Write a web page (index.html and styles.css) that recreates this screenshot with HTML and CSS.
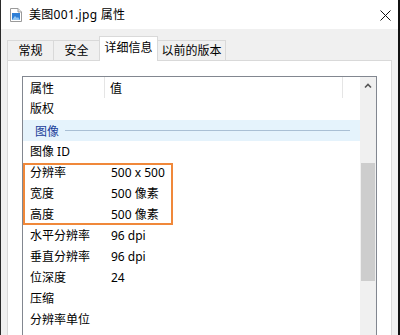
FILE: index.html
```html
<!DOCTYPE html>
<html lang="zh-CN">
<head>
  <meta charset="UTF-8">
  <title>美图001.jpg 属性</title>
  <link rel="stylesheet" href="styles.css">
</head>
<body>
  <div class="window">
    <div class="titlebar">
      <svg class="file-icon" width="12" height="14" viewBox="0 0 12 14">
        <path d="M0.5 0.5 H8 L11.5 4 V13.5 H0.5 Z" fill="#fff" stroke="#9a9a9a"/>
        <path d="M8 0.5 V4 H11.5" fill="#e8e8e8" stroke="#9a9a9a"/>
        <rect x="2" y="5" width="8" height="7" fill="#2f7fd6"/>
        <path d="M2 12 L5 8 L7 10 L8 9 L10 12 Z" fill="#8fc4f2"/>
      </svg>
      <span class="title">美图001.jpg 属性</span>
      <svg class="close" width="11" height="11" viewBox="0 0 11 11">
        <path d="M0.5 0.5 L10.5 10.5 M10.5 0.5 L0.5 10.5" stroke="#111" stroke-width="1"/>
      </svg>
    </div>

    <div class="body">
      <div class="tabs">
        <div class="tab w46">常规</div>
        <div class="tab w46">安全</div>
        <div class="tab active">详细信息</div>
        <div class="tab w68">以前的版本</div>
      </div>

      <div class="panel">
        <div class="list">
          <div class="list-main">
            <div class="header">
              <div class="hcell c1">属性</div>
              <div class="hcell c2">值</div>
            </div>
            <div class="row"><span>版权</span><span></span></div>
            <div class="group">
              <span class="group-name">图像</span>
              <span class="group-line"></span>
            </div>
            <div class="row"><span>图像 ID</span><span></span></div>
            <div class="highlight">
              <div class="row"><span>分辨率</span><span>500 x 500</span></div>
              <div class="row"><span>宽度</span><span>500 像素</span></div>
              <div class="row"><span>高度</span><span>500 像素</span></div>
            </div>
            <div class="row"><span>水平分辨率</span><span>96 dpi</span></div>
            <div class="row"><span>垂直分辨率</span><span>96 dpi</span></div>
            <div class="row"><span>位深度</span><span>24</span></div>
            <div class="row"><span>压缩</span><span></span></div>
            <div class="row"><span>分辨率单位</span><span></span></div>
          </div>
          <div class="scrollbar">
            <div class="arrow">
              <svg width="8" height="6" viewBox="0 0 8 6">
                <path d="M1 4.5 L4 1.5 L7 4.5" fill="none" stroke="#555" stroke-width="1.6"/>
              </svg>
            </div>
            <div class="thumb"></div>
          </div>
        </div>
      </div>
    </div>
  </div>
</body>
</html>
```

FILE: styles.css
```css
body {
  margin: 0;
  overflow: hidden;
  font-family: "Noto Sans", "Noto Sans CJK SC", sans-serif;
  font-size: 12px;
  color: #000;
}
.window {
  width: 400px;
  height: 335px;
  box-sizing: border-box;
  border-left: 1px solid #2a2a2a;
  border-right: 2px solid #111;
  background: #f0f0f0;
  overflow: hidden;
}
.titlebar {
  height: 29px;
  background: #fff;
  display: flex;
  align-items: center;
  padding-left: 9px;
}
.file-icon {
  margin-top: 1px;
}
.title {
  margin-left: 7px;
  font-size: 12px;
  line-height: 14px;
  letter-spacing: 0.3px;
}
.close {
  margin-left: auto;
  margin-right: 7px;
  margin-top: 1px;
}
.body {
  padding: 7px 6px 0 6px;
}
.tabs {
  display: flex;
  align-items: flex-end;
  height: 24px;
  position: relative;
  z-index: 1;
}
.tab {
  height: 20px;
  box-sizing: border-box;
  border: 1px solid #d9d9d9;
  border-bottom: none;
  margin-left: -1px;
  background: #f0f0f0;
  text-align: center;
  line-height: 20px;
}
.tab:first-child {
  margin-left: 0;
}
.w46 { width: 47px; }
.w68 { width: 69px; }
.tab.active {
  width: 59px;
  height: 25px;
  margin-bottom: -1px;
  background: #fff;
  line-height: 22px;
}
.panel {
  background: #fff;
  border: 1px solid #d9d9d9;
  padding: 15px 14px 0 14px;
  height: 300px;
}
.list {
  display: flex;
  border: 1px solid #828790;
  border-bottom: none;
  height: 290px;
}
.list-main {
  flex: 1;
}
.header {
  display: flex;
  height: 21px;
}
.hcell {
  border-right: 1px solid #e5e5e5;
  line-height: 20px;
  padding-top: 2px;
  box-sizing: border-box;
}
.hcell.c1 {
  width: 82px;
  padding-left: 7px;
}
.hcell.c2 {
  width: 238px;
  padding-left: 5px;
}
.row {
  display: grid;
  grid-template-columns: 82px 1fr;
  height: 21px;
  line-height: 21px;
}
.row span:first-child {
  padding-left: 7px;
}
.row span:last-child {
  padding-left: 6px;
}
.group {
  display: flex;
  align-items: center;
  height: 21px;
  margin-top: 1px;
  background: #e5f3fc;
}
.group-name {
  padding-left: 12px;
  color: #1b3e9a;
}
.group-line {
  flex: 1;
  height: 1px;
  background: #a9bfd4;
  margin: 0 10px 0 6px;
}
.highlight {
  position: relative;
}
.highlight::after {
  content: "";
  position: absolute;
  left: 0;
  top: 1px;
  width: 150px;
  height: 62px;
  box-sizing: border-box;
  border: 2px solid #f0883a;
}
.scrollbar {
  width: 16px;
  background: #f0f0f0;
  display: flex;
  flex-direction: column;
  align-items: center;
}
.arrow {
  height: 17px;
  display: flex;
  align-items: center;
  justify-content: center;
}
.thumb {
  width: 14px;
  height: 118px;
  margin-top: 69px;
  background: #cdcdcd;
}
```
